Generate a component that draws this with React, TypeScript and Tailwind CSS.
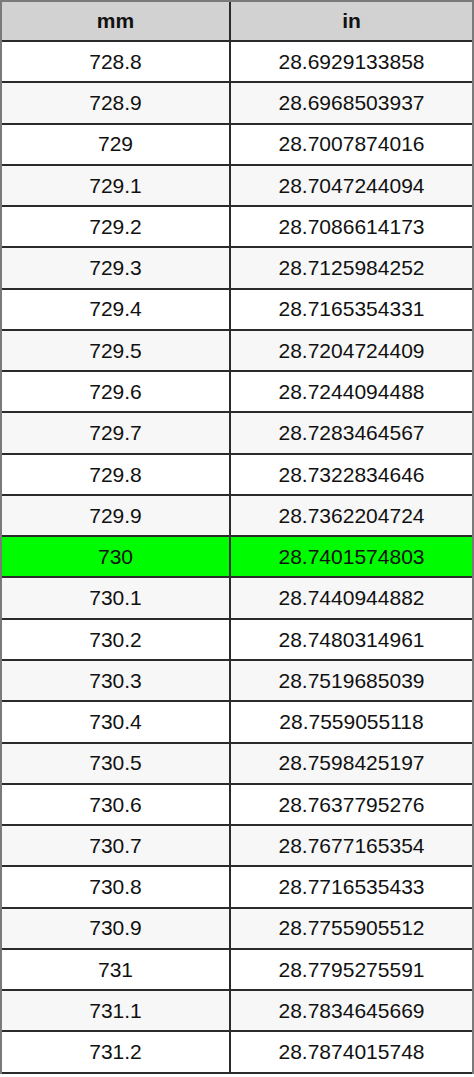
const rows: [string, string][] = [
  ['728.8', '28.6929133858'],
  ['728.9', '28.6968503937'],
  ['729', '28.7007874016'],
  ['729.1', '28.7047244094'],
  ['729.2', '28.7086614173'],
  ['729.3', '28.7125984252'],
  ['729.4', '28.7165354331'],
  ['729.5', '28.7204724409'],
  ['729.6', '28.7244094488'],
  ['729.7', '28.7283464567'],
  ['729.8', '28.7322834646'],
  ['729.9', '28.7362204724'],
  ['730', '28.7401574803'],
  ['730.1', '28.7440944882'],
  ['730.2', '28.7480314961'],
  ['730.3', '28.7519685039'],
  ['730.4', '28.7559055118'],
  ['730.5', '28.7598425197'],
  ['730.6', '28.7637795276'],
  ['730.7', '28.7677165354'],
  ['730.8', '28.7716535433'],
  ['730.9', '28.7755905512'],
  ['731', '28.7795275591'],
  ['731.1', '28.7834645669'],
  ['731.2', '28.7874015748'],
];

export default function App() {
  return (
    <div className="w-[474px] h-[1077px] bg-white font-['Liberation_Sans',Arial,sans-serif] text-[21px] text-[#111]">
      <div className="border-x-2 border-t-2 border-[#7a7a7a]">
        <div className="grid grid-cols-[229px_1fr] h-[40px] bg-[#d2d2d2] border-b-2 border-[#2b2b2b] font-bold">
          <div className="flex items-center justify-center border-r-2 border-[#2b2b2b]">mm</div>
          <div className="flex items-center justify-center">in</div>
        </div>
        {rows.map(([mm, inch], i) => {
          const hl = mm === '730';
          const bg = hl ? 'bg-[#00fc00]' : i % 2 === 1 ? 'bg-[#f7f7f7]' : 'bg-white';
          return (
            <div
              key={mm}
              className={`grid grid-cols-[229px_1fr] h-[41.28px] border-b-2 border-[#2b2b2b] ${bg}`}
            >
              <div className="flex items-center justify-center border-r-2 border-[#2b2b2b]">{mm}</div>
              <div className="flex items-center justify-center">{inch}</div>
            </div>
          );
        })}
      </div>
    </div>
  );
}
